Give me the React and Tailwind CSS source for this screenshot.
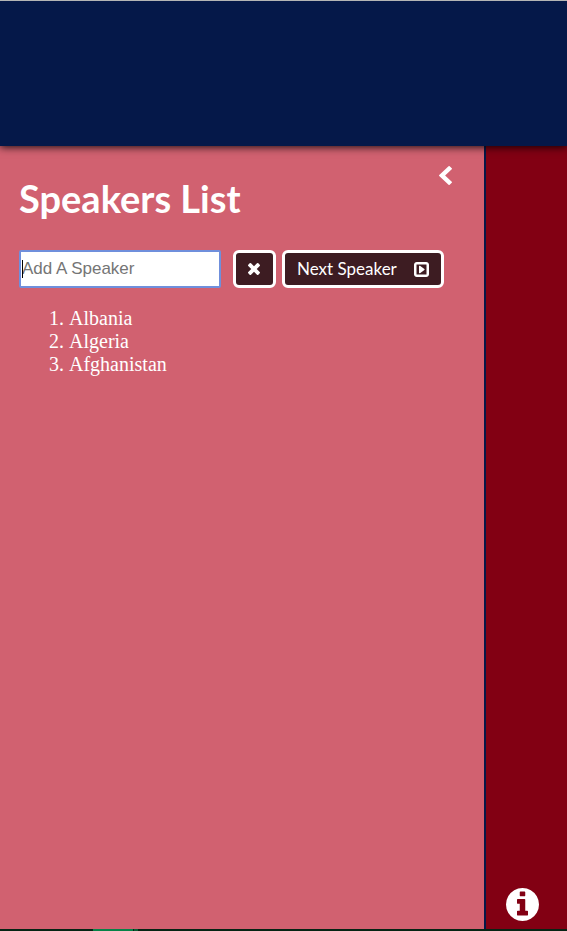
import React from "react";

const speakers = ["Albania", "Algeria", "Afghanistan"];

function ChevronLeftIcon() {
  return (
    <svg viewBox="410 26 1036 1612" className="h-[19px] w-[13px] fill-white" preserveAspectRatio="none" aria-hidden="true">
      <path d="M1427 301l-531 531 531 531q19 19 19 45t-19 45l-166 166q-19 19-45 19t-45-19l-742-742q-19-19-19-45t19-45l742-742q19-19 45-19t45 19l166 166q19 19 19 45t-19 45z" />
    </svg>
  );
}

function TimesIcon() {
  return (
    <svg viewBox="302 366 1188 1188" className="size-3 fill-white" aria-hidden="true">
      <path d="M1490 1322q0 40-28 68l-136 136q-28 28-68 28t-68-28l-294-294-294 294q-28 28-68 28t-68-28l-136-136q-28-28-28-68t28-68l294-294-294-294q-28-28-28-68t28-68l136-136q28-28 68-28t68 28l294 294 294-294q28-28 68-28t68 28l136 136q28 28 28 68t-28 68l-294 294 294 294q28 28 28 68z" />
    </svg>
  );
}

function PlaySquareIcon() {
  return (
    <svg viewBox="128 128 1536 1536" className="size-[15px] fill-white" aria-hidden="true">
      <path d="M1216 896q0 33-27 52l-448 320q-31 23-66 5-35-17-35-57v-640q0-40 35-57 35-18 66 5l448 320q27 19 27 52zm192 480v-960q0-13-9.5-22.5t-22.5-9.5h-960q-13 0-22.5 9.5t-9.5 22.5v960q0 13 9.5 22.5t22.5 9.5h960q13 0 22.5-9.5t9.5-22.5zm256-960v960q0 119-84.5 203.5t-203.5 84.5h-960q-119 0-203.5-84.5t-84.5-203.5v-960q0-119 84.5-203.5t203.5-84.5h960q119 0 203.5 84.5t84.5 203.5z" />
    </svg>
  );
}

function InfoIcon() {
  return (
    <svg viewBox="128 128 1536 1536" className="size-[33px] fill-white" aria-hidden="true">
      <path d="M1152 1376v-160q0-14-9-23t-23-9h-96v-512q0-14-9-23t-23-9h-320q-14 0-23 9t-9 23v160q0 14 9 23t23 9h96v320h-96q-14 0-23 9t-9 23v160q0 14 9 23t23 9h448q14 0 23-9t9-23zm-128-896v-160q0-14-9-23t-23-9h-192q-14 0-23 9t-9 23v160q0 14 9 23t23 9h192q14 0 23-9t9-23zm640 416q0 209-103 385.5t-279.5 279.5-385.5 103-385.5-103-279.5-279.5-103-385.5 103-385.5 279.5-279.5 385.5-103 385.5 103 279.5 279.5 103 385.5z" />
    </svg>
  );
}

function SpeakersPanel() {
  return (
    <section className="flex-1 border-r-2 border-[#051849] bg-[#d16170] pr-8 pl-[19px] text-white">
      <div className="flex items-start justify-between pt-5">
        <h1 className="pt-1 font-['Lato',sans-serif] text-[38px] leading-[56px] font-bold">Speakers List</h1>
        <button type="button" aria-label="Collapse speakers list">
          <ChevronLeftIcon />
        </button>
      </div>
      <form className="mt-6 flex h-[38px]" onSubmit={(e) => e.preventDefault()}>
        <div className="relative w-[202px]">
          <input
            type="text"
            aria-label="Add a speaker"
            placeholder="Add A Speaker"
            className="size-full rounded-xs border-2 border-[#6f8fdc] bg-white px-px font-['Liberation_Sans',sans-serif] text-[17px] text-black outline-none placeholder:text-[#757575]"
          />
          <span className="absolute top-[10px] left-[3px] h-[18px] w-px bg-black" aria-hidden="true" />
        </div>
        <button
          type="button"
          aria-label="Clear speakers"
          className="ml-3 flex w-[43px] items-center rounded-md border-3 border-white bg-[#3d1c22] pl-3"
        >
          <TimesIcon />
        </button>
        <button
          type="button"
          className="ml-[6px] flex w-[162px] items-center justify-between rounded-md border-3 border-white bg-[#3d1c22] px-3 font-['Lato',sans-serif] text-[17px] leading-5 whitespace-nowrap"
        >
          Next Speaker
          <PlaySquareIcon />
        </button>
      </form>
      <ol className="mt-[19px] list-decimal pl-[50px] font-['Liberation_Serif',serif] text-[20px] leading-[23px]">
        {speakers.map((name) => (
          <li key={name}>{name}</li>
        ))}
      </ol>
    </section>
  );
}

export default function App() {
  return (
    <div className="flex min-h-screen flex-col bg-[#820013]">
      <header className="z-10 h-[146px] border-t border-[#b5b5b5] bg-[#051849] shadow-[0_1px_8px_rgba(0,0,0,0.9)]" />
      <main className="flex flex-1">
        <SpeakersPanel />
        <aside className="flex w-[81px] flex-col items-start justify-end pb-2 pl-5">
          <button type="button" aria-label="Information">
            <InfoIcon />
          </button>
        </aside>
      </main>
      <footer className="flex h-[2px] bg-[#062414]">
        <div className="ml-[93px] w-10 bg-[#078348]" />
        <div className="ml-px w-1 bg-[#0b5c34]" />
      </footer>
    </div>
  );
}
